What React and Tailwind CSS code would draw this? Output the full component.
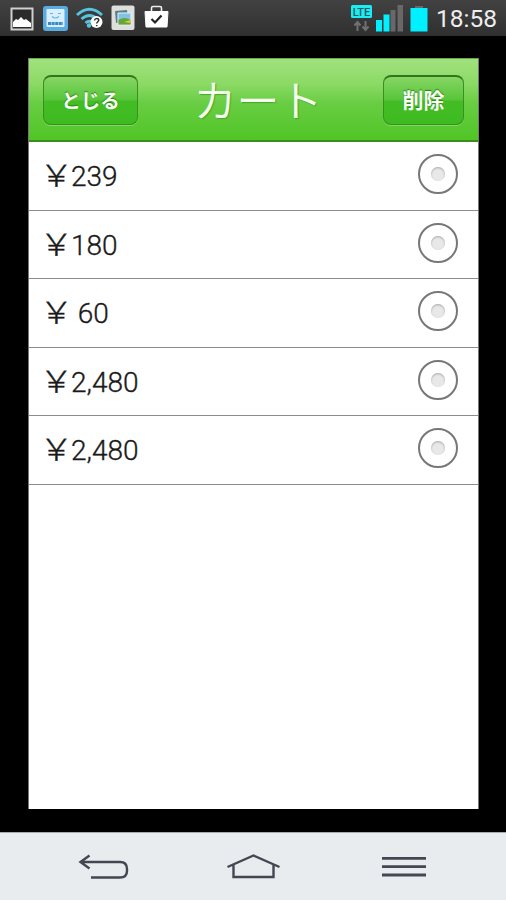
const prices = ["239", "180", " 60", "2,480", "2,480"];

const StatusIcons = () => (
    <svg width="180" height="36" viewBox="0 0 180 36">
        {/* gallery */}
        <rect x="11.5" y="8.5" width="21" height="21" fill="#2b2b2b" stroke="#d0d0d0" strokeWidth="2" />
        <path d="M13 27v-5l3-3 2 1 3-3 3 3 2-1 5 4v4z" fill="#fff" />
        {/* shop */}
        <rect x="43" y="6" width="25" height="25" rx="3" fill="#5aabe0" />
        <rect x="46.5" y="9" width="18" height="18" rx="1" fill="#d9efff" />
        <path d="M50 13.5h3M58 13.5h3M52 16.5q3.5 3 7 0" fill="none" stroke="#62b2e4" strokeWidth="1.2" />
        <path d="M48 23.5h15" stroke="#3588c2" strokeWidth="3" strokeDasharray="3 0.6" />
        {/* wifi */}
        <g fill="none" stroke="#58c5e0" strokeWidth="2.8">
            <path d="M77 15q12.500-11.500 25 0" />
            <path d="M81.500 19q8-7 16 0" />
            <path d="M85.500 23q4-3.500 8 0" />
        </g>
        <circle cx="89" cy="25.5" r="2.2" fill="#58c5e0" />
        <circle cx="96.5" cy="22" r="6" fill="#fff" />
        <path d="M94.500 20.500q.300-2 2.200-2 2 0 2 1.700c0 1.500-2 1.600-2 3.300M96.700 25v1.300" fill="none" stroke="#333" strokeWidth="1.5" />
        {/* picture viewer */}
        <rect x="111.500" y="5.500" width="23" height="24.500" rx="2" fill="#dededa" />
        <path d="M115 11l12-1 1 12-12 1z" fill="#5b7f8e" />
        <path d="M118 13h13v12h-13z" fill="#7ec4ea" stroke="#eee" strokeWidth="1" />
        <path d="M118.500 20q6-4 12 0v4.500h-12z" fill="#65a535" />
        <path d="M124 22l6.500-2v3z" fill="#f0c834" />
        {/* store bag */}
        <path d="M145 11.500h23l-1 15.500h-21z" fill="#fff" stroke="#fff" strokeLinejoin="round" />
        <path d="M151.500 11V8q0-1.500 1.500-1.500h7q1.500 0 1.500 1.500v3" fill="none" stroke="#eee" strokeWidth="1.6" />
        <path d="M151.500 19l3.500 3.500 6.500-7" fill="none" stroke="#222" strokeWidth="2.2" />
    </svg>
);

const Signal = () => (
    <svg width="80" height="36" viewBox="350 0 80 36" className="font-['Roboto',sans-serif]">
        <rect x="352" y="5" width="21" height="13" rx="1.5" fill="#1cecf4" />
        <text x="362.5" y="15.5" textAnchor="middle" fontSize="11" fontWeight="500" fill="#14595c">LTE</text>
        <path d="M358.500 31v-8M355.500 25.500l3-3.500 3 3.500M366.500 21v8M363.500 26.500l3 3.500 3-3.500" fill="none" stroke="#707070" strokeWidth="2" />
        <path d="M377 20h6v11.500h-6zM384.500 14.500h6v17h-6z" fill="#00f0ff" />
        <path d="M391.500 10h5v21.500h-5zM398.500 5h5.500v26.500h-5.500z" fill="#686868" />
        <path d="M416 6h8v2h-8z" fill="#686868" />
        <path d="M411.500 8h17v23.500h-17z" fill="#00f0ff" />
    </svg>
);

const HeaderButton = ({ label, className }) => (
    <button
        className={`mt-px h-[50px] rounded-[8px] border border-t-2 border-[#3a8f20] border-t-[#35731f] bg-[linear-gradient(#87d664_0%,#57c53a_49%,#44bd25_51%,#3dbb20_100%)] pb-px font-bold text-[#f8fff5] shadow-[0_1px_0_#83d965] [text-shadow:0_-1px_1px_#2d7a18] ${className}`}
    >
        {label}
    </button>
);

const CartRow = ({ price }) => (
    <li className="flex h-[68.5px] items-center justify-between border-b border-[#8c8c8c] pr-[20px] pl-[14px]">
        <p className="flex items-center pt-[3px] whitespace-pre text-[28px] leading-none text-[#1a1a1a] [-webkit-text-stroke:0.35px_#1a1a1a]">
            <span className="mb-[7px] w-[28px] origin-[14px_50%] scale-x-[1.25] scale-y-110 font-['Noto_Sans_CJK_JP',sans-serif] text-[27px] font-light">￥</span>
            <span className="font-['Roboto',sans-serif] font-light">{price}</span>
        </p>
        <div className="mb-[3px] flex size-10 items-center justify-center rounded-full border-2 border-[#777]">
            <div className="size-[14px] rounded-full bg-[#e8e8e8] shadow-[inset_0_1px_2px_#aaa]" />
        </div>
    </li>
);

const App = () => {
    return (
        <div className="flex h-[900px] w-[506px] flex-col overflow-hidden bg-black font-['Noto_Sans_CJK_JP',sans-serif]">
            <div className="flex h-[36px] shrink-0 justify-between bg-linear-to-b from-[#424242] to-[#303030]">
                <StatusIcons />
                <div className="flex pr-[9px]">
                    <Signal />
                    <span className="ml-[7px] font-['Roboto',sans-serif] text-[24.5px] leading-[38px] text-[#eee]">18:58</span>
                </div>
            </div>

            <main className="mt-[22px] ml-[28px] flex h-[751px] w-[451px] shrink-0 flex-col border-x border-[#777] bg-white">
                <header className="flex h-[84px] shrink-0 items-center justify-between border-t border-b-2 border-t-[#65aa46] border-b-[#3b8d1c] bg-[linear-gradient(#a1e17e_0%,#8cda66_30%,#68cd42_55%,#50c526_100%)] pr-[14px] pl-[14px]">
                    <HeaderButton label="とじる" className="w-[95px] text-[19.5px]" />
                    <h1 className="mr-[5px] mb-[2px] text-[43px] leading-none font-[350] text-[#f5ffed] [text-shadow:1px_1px_1px_#4ba52e]">カート</h1>
                    <HeaderButton label="削除" className="w-[81px] text-[21px]" />
                </header>
                <ul>
                    {prices.map((price, i) => (
                        <CartRow key={i} price={price} />
                    ))}
                </ul>
            </main>

            <nav className="mt-[23px] h-[68px] shrink-0 border-t border-[#aaa] bg-[#e8ecef]">
                <svg width="506" height="67" viewBox="0 833 506 67" fill="none" stroke="#454652" strokeWidth="2.4">
                    <path d="M80.500 862H120q7 0 7 7v2q0 6.500-7 6.500H91M89.500 855.500l-9 6.500 9 6.500" />
                    <path d="M227.500 867l26-11.500 26 11.500M233.500 865v12h40v-12" />
                    <path d="M382 858.300h44M382 866.700h44M382 875h44" strokeWidth="2.8" />
                </svg>
            </nav>
        </div>
    );
};

export default App;
